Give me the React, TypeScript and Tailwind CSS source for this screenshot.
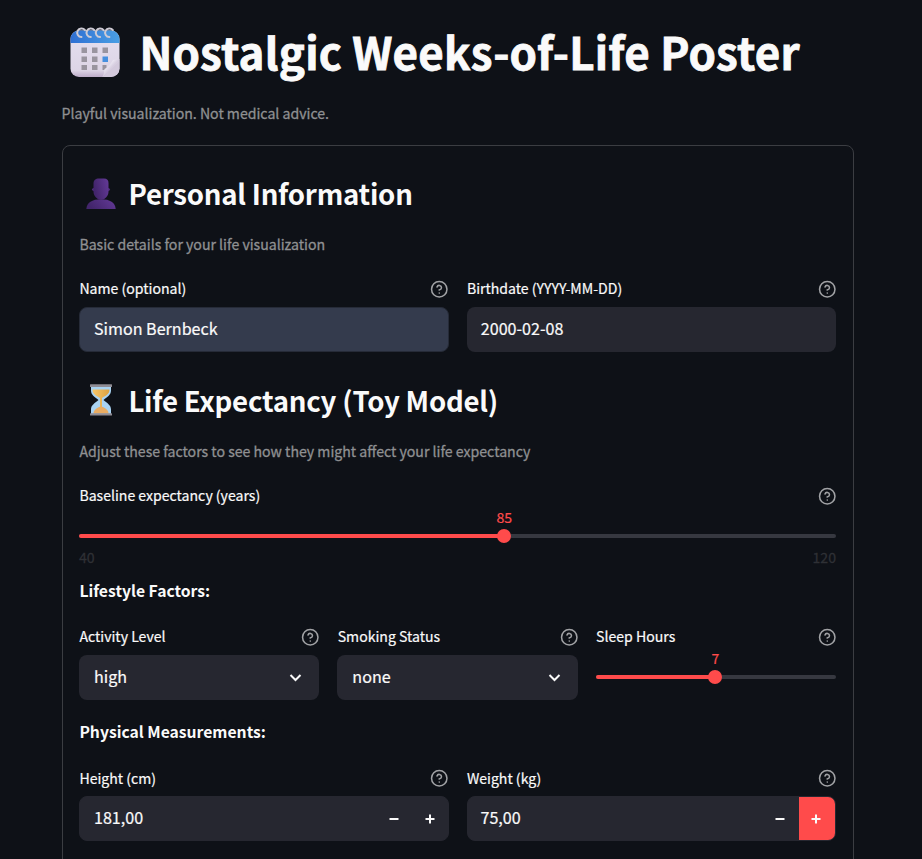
import React from "react";

const Calendar = () => (
  <svg width="50" height="52" viewBox="0 0 50 52" className="shrink-0">
    <defs>
      <linearGradient id="calTop" x1="0" y1="0" x2="1" y2="0">
        <stop offset="0" stopColor="#2f6fd3" />
        <stop offset="1" stopColor="#4a9fe4" />
      </linearGradient>
      <linearGradient id="calBody" x1="0" y1="0" x2="0" y2="1">
        <stop offset="0" stopColor="#e6e0f0" />
        <stop offset="0.85" stopColor="#ddd5e6" />
        <stop offset="1" stopColor="#b8a6c4" />
      </linearGradient>
      <linearGradient id="calFold" x1="0" y1="0" x2="1" y2="1">
        <stop offset="0" stopColor="#c9bfd3" />
        <stop offset="0.3" stopColor="#f1ecf6" />
        <stop offset="0.5" stopColor="#d6cddf" />
        <stop offset="0.75" stopColor="#cbc0d5" />
      </linearGradient>
      <clipPath id="calClip">
        <rect x="0.5" y="4.500" width="49" height="46.500" rx="8.5" />
      </clipPath>
    </defs>
    <g clipPath="url(#calClip)">
      <rect width="50" height="52" fill="url(#calBody)" />
      <rect width="50" height="17" fill="url(#calTop)" />
      <g fill="#99949f">
        <rect x="11.5" y="21.5" width="5.5" height="5.5" />
        <rect x="22" y="21.5" width="5.5" height="5.5" />
        <rect x="32.5" y="21.5" width="5.5" height="5.5" />
        <rect x="11.5" y="30.5" width="5.5" height="5.5" />
        <rect x="22" y="30.5" width="5.5" height="5.5" />
        <rect x="11.5" y="39" width="5.5" height="5" />
        <rect x="22" y="39" width="5.5" height="5" />
        <rect x="32.5" y="39" width="4" height="5" />
      </g>
      <rect x="32.5" y="30.5" width="5.5" height="5.5" fill="#468fdf" />
      <path d="M32 51.5C34 49 34 46 34.500 43C38 41.500 41 37.500 43 34L50 33V34L32 52Z" fill="url(#calFold)" />
      <path d="M32 52L50 34V52Z" fill="#d3c9dc" />
    </g>
    <g fill="none" stroke="#cdcad4" strokeWidth="2" strokeLinecap="round">
      <path d="M15 4.200A4.300 4.300 0 1 0 11.500 11" />
      <path d="M24.300 4.200A4.300 4.300 0 1 0 20.800 11" />
      <path d="M33.600 4.200A4.300 4.300 0 1 0 30.100 11" />
      <path d="M42.900 4.200A4.300 4.300 0 1 0 39.400 11" />
    </g>
  </svg>
);

const Person = () => (
  <svg width="30" height="32" viewBox="0 0 30 32" className="shrink-0">
    <defs>
      <linearGradient id="bust" x1="0" y1="0.3" x2="1" y2="0">
        <stop offset="0" stopColor="#42256b" />
        <stop offset="1" stopColor="#643a98" />
      </linearGradient>
    </defs>
    <path d="M0.300 31C0.800 24.500 6 21.200 15 21.200S29.200 24.500 29.700 31Z" fill="url(#bust)" />
    <ellipse cx="15" cy="11.500" rx="9.200" ry="2.500" fill="#4c2b7a" />
    <path d="M7.500 5.500C7.500 2 9.500 0.500 13 0.500H18C21 0.500 22.500 2 22.500 5V13.500C22.500 18 19 21.800 15 21.800S7.500 18 7.500 13.500Z" fill="url(#bust)" />
  </svg>
);

const Hourglass = () => (
  <svg width="24" height="32" viewBox="0 0 24 32" className="-mt-px shrink-0">
    <defs>
      <linearGradient id="sand" x1="0" y1="0" x2="1" y2="0">
        <stop offset="0" stopColor="#f6c76b" />
        <stop offset="1" stopColor="#dda13f" />
      </linearGradient>
    </defs>
    <path
      d="M2 2H22V6.500C22 11 18.500 12.500 14.500 16C18.500 19.500 22 21 22 25.500V30H2V25.500C2 21 5.500 19.500 9.500 16C5.500 12.500 2 11 2 6.500Z"
      fill="#a9d3f2"
    />
    <path d="M3.500 5.500H20.500C20.500 10 17 11.500 13 14V24H11V14C7 11.500 3.500 10 3.500 5.500Z" fill="url(#sand)" />
    <path d="M4.500 29.500C4.500 25.500 9 23.300 12 22.500C15 23.300 19.500 25.500 19.500 29.500Z" fill="#e9ac63" />
    <rect x="1" y="0.300" width="22" height="2.600" rx="0.500" fill="#8f8c94" />
    <rect x="1" y="29.200" width="22" height="2.300" rx="0.500" fill="#8f8c94" />
  </svg>
);

const Help = () => (
  <svg width="18.500" height="18.500" viewBox="0 0 24 24" fill="none" stroke="#a1a2a5" strokeWidth="2" strokeLinecap="round" strokeLinejoin="round" className="-mr-[0.4px] shrink-0">
    <circle cx="12" cy="12" r="10" />
    <path d="M9.090 9a3 3 0 0 1 5.830 1c0 2-3 3-3 3" />
    <path d="M12 17h.01" />
  </svg>
);

const Label = ({ text, low }: { text: string; low?: boolean }) => (
  <div className="flex h-6 items-center justify-between pl-[0.4px]">
    <span className={`whitespace-nowrap text-[14.080px] leading-[22px] [-webkit-text-stroke:0.2px] ${low ? "" : "pb-0.5"}`}>{text}</span>
    <Help />
  </div>
);

const Caption = ({ children }: { children: React.ReactNode }) => (
  <p className="h-6 whitespace-nowrap text-[14.120px] leading-[22px] text-[#8f9092] [-webkit-text-stroke:0.3px]">{children}</p>
);

const Heading = ({ icon, children }: { icon: React.ReactNode; children: React.ReactNode }) => (
  <h2 className="flex h-[50px] items-start">
    <span className="flex w-[49.400px] justify-center pr-[6.400px] pt-2">{icon}</span>
    <span className="whitespace-nowrap text-[27.600px] font-semibold leading-[47px] tracking-[-0.23px]">{children}</span>
  </h2>
);

const Select = ({ value }: { value: string }) => (
  <div className="mt-1.5 flex h-[45px] items-center justify-between rounded-lg bg-[#262730] pl-[15px] pr-[17px] text-[16.100px] [-webkit-text-stroke:0.2px]">
    <span className="pb-0.5">{value}</span>
    <svg width="13" height="13" viewBox="0 0 13 13" fill="none" stroke="#fafafa" strokeWidth="2">
      <path d="M1.500 4L6.500 9L11.500 4" />
    </svg>
  </div>
);

const Sign = ({ plus }: { plus?: boolean }) => (
  <svg width="10" height="10" viewBox="0 0 10 10" fill="none" stroke="#fafafa" strokeWidth="2">
    <path d={plus ? "M0.500 5H9.500M5 0.500V9.500" : "M0.500 5H9.500"} />
  </svg>
);

const NumberField = ({ value, active }: { value: string; active?: boolean }) => (
  <div className="mt-1.5 flex h-[45px] items-stretch overflow-hidden rounded-lg border border-[#262730] bg-[#262730] text-[16.100px] [-webkit-text-stroke:0.2px]">
    <span className={`flex flex-1 items-center pb-0.5 ${active ? "pl-[13px]" : "pl-[14px]"}`}>{value}</span>
    <span className={`flex w-9 items-center justify-center ${active ? "pr-0.5" : ""}`}><Sign /></span>
    <span className={`flex w-9 items-center justify-center ${active ? "bg-[#ff4b4b] pr-0.5" : ""}`}><Sign plus /></span>
  </div>
);

const Slider = ({ value, percent }: { value: string; percent: number }) => (
  <div className="relative h-1 rounded-full bg-[#363840]">
    <div className="h-1 rounded-full bg-[#ff4b4b]" style={{ width: `${percent}%` }} />
    <div
      className="absolute -top-[5px] -ml-[0.5px] size-[14px] -translate-x-1/2 rounded-full bg-[#ff4b4b]"
      style={{ left: `${percent}%` }}
    />
    <span
      className="absolute -top-[27px] -ml-[0.5px] -translate-x-1/2 text-[14.080px] leading-5 text-[#ff4b4b] [-webkit-text-stroke:0.2px]"
      style={{ left: `${percent}%` }}
    >
      {value}
    </span>
  </div>
);

export default function App() {
  return (
    <main className="h-[859px] overflow-hidden bg-[#0e1117] pl-[62px] pr-[68px] font-['Noto_Sans_CJK_SC',sans-serif] text-[#fafafa]">
      <h1 className="flex h-[106px] items-start">
        <span className="w-[77.500px] pl-[8px] pt-[26px]"><Calendar /></span>
        <span className="mt-[21px] whitespace-nowrap text-[43.900px] font-bold leading-[60px] tracking-[0.2px] [-webkit-text-stroke:0.8px]">Nostalgic Weeks-of-Life Poster</span>
      </h1>
      <div className="-ml-[0.4px] -mt-1">
        <Caption>Playful visualization. Not medical advice.</Caption>
      </div>
      <section className="mt-[19px] h-[760px] rounded-lg border border-[#3b3d42] pl-[16px] pr-[17px] pt-6">
        <Heading icon={<Person />}>Personal Information</Heading>
        <div className="mt-[13px] pl-[0.4px]"><Caption>Basic details for your life visualization</Caption></div>
        <div className="mt-5 grid grid-cols-2 gap-[18px]">
          <div>
            <Label text="Name (optional)" />
            <div className="mt-1.5 flex h-[45px] items-center rounded-lg border border-[#262b38] bg-[#343b4d] pb-[3px] pl-[14px] text-[16.100px] [-webkit-text-stroke:0.2px]">Simon Bernbeck</div>
          </div>
          <div>
            <Label text="Birthdate (YYYY-MM-DD)" />
            <div className="mt-1.5 flex h-[45px] items-center rounded-lg bg-[#262730] pb-[3px] pl-[14.300px] text-[16.100px] [-webkit-text-stroke:0.2px]">2000-02-08</div>
          </div>
        </div>
        <div className="mt-[25px]"><Heading icon={<Hourglass />}>Life Expectancy (Toy Model)</Heading></div>
        <div className="mt-[13px] pl-[0.4px]"><Caption>Adjust these factors to see how they might affect your life expectancy</Caption></div>
        <div className="mt-5">
          <Label text="Baseline expectancy (years)" />
          <div className="mt-[26px]"><Slider value="85" percent={56.25} /></div>
          <div className="mt-2 flex h-6 justify-between text-[14.080px] leading-[22px] text-[#2e3035] [-webkit-text-stroke:0.3px]">
            <span>40</span>
            <span>120</span>
          </div>
        </div>
        <p className="mt-[9px] h-6 pl-[0.4px] text-[15.700px] font-semibold leading-6">Lifestyle Factors:</p>
        <div className="mt-[22px] grid grid-cols-3 gap-[18px]">
          <div>
            <Label text="Activity Level" />
            <Select value="high" />
          </div>
          <div>
            <Label text="Smoking Status" />
            <Select value="none" />
          </div>
          <div>
            <Label text="Sleep Hours" />
            <div className="mt-[26px]"><Slider value="7" percent={50} /></div>
          </div>
        </div>
        <p className="mt-[20px] h-6 pl-[0.4px] text-[15.700px] font-semibold leading-6">Physical Measurements:</p>
        <div className="mt-[22px] grid grid-cols-2 gap-[18px]">
          <div>
            <Label text="Height (cm)" low />
            <NumberField value="181,00" />
          </div>
          <div>
            <Label text="Weight (kg)" low />
            <NumberField value="75,00" active />
          </div>
        </div>
      </section>
    </main>
  );
}
